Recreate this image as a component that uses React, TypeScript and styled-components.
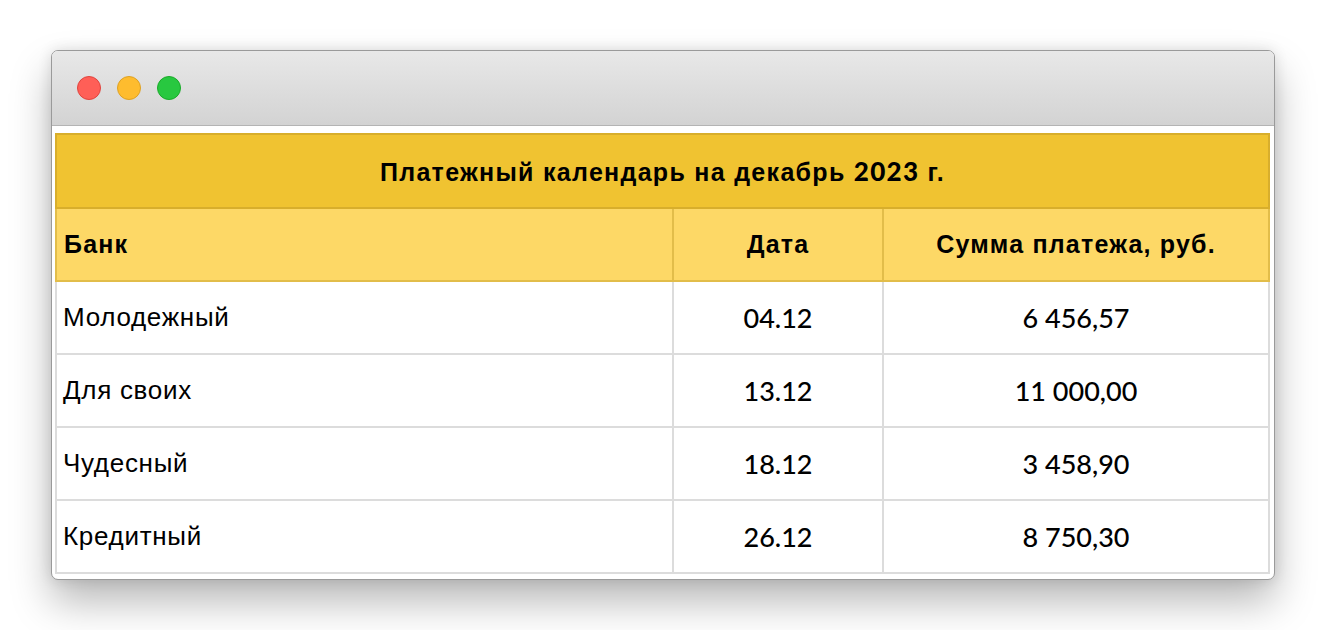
import React from 'react';
import styled, { createGlobalStyle } from 'styled-components';

const GlobalStyle = createGlobalStyle`
  html, body {
    margin: 0;
    padding: 0;
    background: #ffffff;
  }
  body {
    font-family: 'Liberation Sans', Arial, sans-serif;
  }
`;

const Page = styled.div`
  padding: 50px 51px;
  width: 1224px;
`;

const Window = styled.div`
  border: 1px solid #9a9a9a;
  border-radius: 7px;
  overflow: hidden;
  background: #ffffff;
  box-shadow: 0 22px 40px rgba(0, 0, 0, 0.28), 0 0 14px rgba(0, 0, 0, 0.12);
`;

const TitleBar = styled.div`
  display: flex;
  align-items: center;
  gap: 16px;
  height: 74px;
  padding-left: 25px;
  background: linear-gradient(#e8e8e8, #d3d3d3);
  border-bottom: 1px solid #b4b4b4;
`;

const Light = styled.span<{ $color: string; $edge: string }>`
  width: 22px;
  height: 22px;
  border-radius: 50%;
  background: ${p => p.$color};
  border: 1px solid ${p => p.$edge};
`;

const Content = styled.div`
  padding: 7px 4px 5px 3px;
`;

const Table = styled.table`
  width: 100%;
  border-collapse: collapse;
  table-layout: fixed;
  font-size: 26px;
  letter-spacing: 0.7px;
  color: #000000;
`;

const TitleCell = styled.th`
  height: 72px;
  background: #f0c331;
  border: 2px solid #d8ae2c;
  font-size: 25px;
  font-weight: bold;
  text-align: center;
  letter-spacing: 1.3px;
  padding: 0;
`;

const HeadCell = styled.th<{ $align?: string }>`
  height: 71px;
  background: #fdd866;
  border: 2px solid #e2bd4a;
  font-size: 25px;
  font-weight: bold;
  text-align: ${p => p.$align || 'center'};
  padding: 0 7px;
  letter-spacing: 1.2px;
`;

const Cell = styled.td<{ $align?: string }>`
  height: 71px;
  border: 2px solid #dcdcdc;
  text-align: ${p => p.$align || 'center'};
  padding: 0 6px;
`;

const Num = styled.span`
  font-family: 'Lato', 'Liberation Sans', sans-serif;
  font-size: 27px;
  font-weight: 500;
  letter-spacing: 0;
`;

const TitleNum = styled.span`
  font-family: 'Lato', 'Liberation Sans', sans-serif;
  font-weight: 900;
  font-size: 26px;
`;

const rows = [
  { bank: 'Молодежный', date: '04.12', sum: '6 456,57' },
  { bank: 'Для своих', date: '13.12', sum: '11 000,00' },
  { bank: 'Чудесный', date: '18.12', sum: '3 458,90' },
  { bank: 'Кредитный', date: '26.12', sum: '8 750,30' },
];

export default function App() {
  return (
    <>
      <GlobalStyle />
      <Page>
        <Window>
          <TitleBar>
            <Light $color="#ff5f57" $edge="#e0443e" />
            <Light $color="#febc2e" $edge="#dea123" />
            <Light $color="#28c840" $edge="#1aab29" />
          </TitleBar>
          <Content>
            <Table>
              <colgroup>
                <col style={{ width: 617 }} />
                <col style={{ width: 210 }} />
                <col />
              </colgroup>
              <thead>
                <tr>
                  <TitleCell colSpan={3}>
                    Платежный календарь на декабрь <TitleNum>2023</TitleNum> г.
                  </TitleCell>
                </tr>
                <tr>
                  <HeadCell $align="left">Банк</HeadCell>
                  <HeadCell>Дата</HeadCell>
                  <HeadCell>Сумма платежа, руб.</HeadCell>
                </tr>
              </thead>
              <tbody>
                {rows.map(r => (
                  <tr key={r.bank}>
                    <Cell $align="left">{r.bank}</Cell>
                    <Cell>
                      <Num>{r.date}</Num>
                    </Cell>
                    <Cell>
                      <Num>{r.sum}</Num>
                    </Cell>
                  </tr>
                ))}
              </tbody>
            </Table>
          </Content>
        </Window>
      </Page>
    </>
  );
}
